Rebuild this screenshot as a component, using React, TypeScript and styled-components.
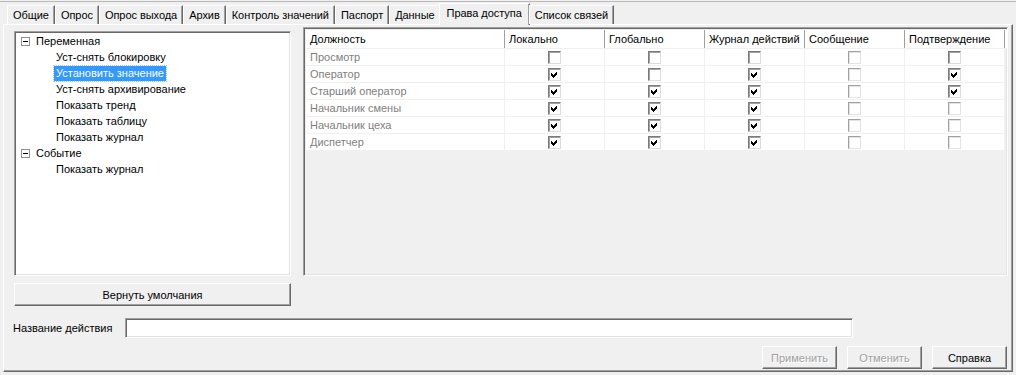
import * as React from 'react';
import styled, { createGlobalStyle, css } from 'styled-components';

const GlobalStyle = createGlobalStyle`
    html, body {
        margin: 0;
        padding: 0;
        background: #f0f0f0;
    }
    body {
        font-family: "Liberation Sans", Arial, sans-serif;
        font-size: 11px;
        color: #000;
    }
`;

const tabs = [
    'Общие',
    'Опрос',
    'Опрос выхода',
    'Архив',
    'Контроль значений',
    'Паспорт',
    'Данные',
    'Права доступа',
    'Список связей',
];

const treeGroups = [
    {
        title: 'Переменная',
        items: [
            'Уст-снять блокировку',
            'Установить значение',
            'Уст-снять архивирование',
            'Показать тренд',
            'Показать таблицу',
            'Показать журнал',
        ],
    },
    {
        title: 'Событие',
        items: ['Показать журнал'],
    },
];

const columns = ['Локально', 'Глобально', 'Журнал действий', 'Сообщение', 'Подтверждение'];

// on = checked, off = disabled
type Cell = { on: boolean; off?: boolean };
const c = (on: number, disabled = false): Cell => ({ on: !!on, off: disabled });

const roles: { name: string; cells: Cell[] }[] = [
    { name: 'Просмотр', cells: [c(0), c(0), c(0), c(0, true), c(0)] },
    { name: 'Оператор', cells: [c(1), c(0), c(1), c(0, true), c(1)] },
    { name: 'Старший оператор', cells: [c(1), c(1), c(1), c(0, true), c(1)] },
    { name: 'Начальник смены', cells: [c(1), c(1), c(1), c(0, true), c(0, true)] },
    { name: 'Начальник цеха', cells: [c(1), c(1), c(1), c(0, true), c(0, true)] },
    { name: 'Диспетчер', cells: [c(1), c(1), c(1), c(0, true), c(0, true)] },
];

const ACTIVE_TAB = 'Права доступа';
const SELECTED_ITEM = 'Установить значение';

export default function App() {
    return (
        <Window>
            <GlobalStyle />
            <TabStrip>
                {tabs.map((t) => (
                    <Tab key={t} active={t === ACTIVE_TAB}>{t}</Tab>
                ))}
            </TabStrip>
            <TabPage>
                <MainRow>
                    <LeftColumn>
                        <TreePanel>
                            {treeGroups.map((g) => (
                                <React.Fragment key={g.title}>
                                    <GroupRow>
                                        <Expander>
                                            <svg width="9" height="9" viewBox="0 0 9 9" shapeRendering="crispEdges">
                                                <rect x="0.5" y="0.5" width="8" height="8" fill="#fff" stroke="#919191" />
                                                <rect x="2" y="4" width="5" height="1" fill="#000" />
                                            </svg>
                                        </Expander>
                                        <span>{g.title}</span>
                                    </GroupRow>
                                    {g.items.map((item, i) => (
                                        <ItemRow key={i}>
                                            <ItemLabel selected={g.title === 'Переменная' && item === SELECTED_ITEM}>
                                                {item}
                                            </ItemLabel>
                                        </ItemRow>
                                    ))}
                                </React.Fragment>
                            ))}
                        </TreePanel>
                        <Button wide>Вернуть умолчания</Button>
                    </LeftColumn>
                    <GridPanel>
                        <HeaderRow>
                            <HeaderCell first>Должность</HeaderCell>
                            {columns.map((col) => (
                                <HeaderCell key={col}>{col}</HeaderCell>
                            ))}
                        </HeaderRow>
                        {roles.map((r) => (
                            <GridRow key={r.name}>
                                <NameCell>{r.name}</NameCell>
                                {r.cells.map((cell, i) => (
                                    <CheckCell key={i}>
                                        <CheckBox disabled={cell.off}>
                                            {cell.on && (
                                                <svg width="9" height="9" viewBox="0 0 9 9" shapeRendering="crispEdges">
                                                    <polygon points="1,3 3,5 7,1 7,4 3,8 1,6" fill="#000" />
                                                </svg>
                                            )}
                                        </CheckBox>
                                    </CheckCell>
                                ))}
                            </GridRow>
                        ))}
                    </GridPanel>
                </MainRow>
                <NameRow>
                    <NameLabel>Название действия</NameLabel>
                    <TextInput />
                </NameRow>
                <ButtonRow>
                    <Button disabled>Применить</Button>
                    <Button disabled>Отменить</Button>
                    <Button>Справка</Button>
                </ButtonRow>
            </TabPage>
        </Window>
    );
}

const Window = styled.div`
    width: 1016px;
    height: 375px;
    box-sizing: border-box;
    background: #f0f0f0;
    border-top: 1px solid #b9b9b9;
    margin-top: 1px;
    overflow: hidden;
`;

const TabStrip = styled.div`
    display: flex;
    align-items: flex-end;
    height: 22px;
    padding-left: 7px;
    position: relative;
    z-index: 1;
`;

const Tab = styled.div<{ active?: boolean }>`
    box-sizing: border-box;
    height: 19px;
    padding: 0 5px 1px;
    display: flex;
    align-items: center;
    white-space: nowrap;
    letter-spacing: -0.05px;
    background: #f0f0f0;
    border-top: 1px solid #fff;
    border-left: 1px solid #fff;
    border-right: 1px solid #696969;
    box-shadow: inset -1px 0 0 #a0a0a0;
    ${(p) => p.active && css`
        height: 22px;
        margin: 0 -1px -1px -2px;
        padding: 0 7px 4px;
    `}
`;

const TabPage = styled.div`
    box-sizing: border-box;
    margin-left: 3px;
    width: 1010px;
    height: 348px;
    border-top: 1px solid #fff;
    border-left: 1px solid #fff;
    border-right: 1px solid #696969;
    border-bottom: 1px solid #696969;
    box-shadow: inset -1px -1px 0 #a0a0a0;
    padding: 2px 4px 0 10px;
`;

const MainRow = styled.div`
    display: flex;
    gap: 12px;
`;

const LeftColumn = styled.div`
    display: flex;
    flex-direction: column;
    width: 277px;
    padding-top: 4px;
`;

const sunken = css`
    box-sizing: border-box;
    border-style: solid;
    border-width: 1px;
    border-color: #a0a0a0 #fff #fff #a0a0a0;
    box-shadow: inset 1px 1px 0 #696969, inset -1px -1px 0 #e3e3e3;
`;

const TreePanel = styled.div`
    ${sunken};
    height: 245px;
    background: #fff;
    padding: 1px 0 0 6px;
`;

const GroupRow = styled.div`
    display: flex;
    align-items: center;
    gap: 6px;
    height: 16px;
`;

const Expander = styled.span`
    display: flex;
    width: 9px;
    height: 9px;
`;

const ItemRow = styled.div`
    display: flex;
    align-items: center;
    height: 16px;
    padding-left: 33px;
`;

const ItemLabel = styled.span<{ selected?: boolean }>`
    padding: 1px 2px;
    line-height: 13px;
    ${(p) => p.selected && css`
        background: #3399ff;
        color: #fff;
        outline: 1px dotted #99ccff;
    `}
`;

const Button = styled.button<{ wide?: boolean }>`
    box-sizing: border-box;
    height: 23px;
    width: ${(p) => (p.wide ? '277px' : '75px')};
    margin-top: ${(p) => (p.wide ? '7px' : '0')};
    font-family: "Liberation Sans", Arial, sans-serif;
    font-size: 11px;
    color: #000;
    background: #f0f0f0;
    border-style: solid;
    border-width: 1px;
    border-color: #fff #696969 #696969 #fff;
    box-shadow: inset -1px -1px 0 #a0a0a0;
    padding: 0;
    &:disabled {
        color: #a0a0a0;
        text-shadow: 1px 1px 0 #fff;
    }
`;

const GridPanel = styled.div`
    ${sunken};
    width: 705px;
    height: 249px;
    background: #f0f0f0;
    padding: 2px 0 0 2px;
`;

const HeaderRow = styled.div`
    display: flex;
    height: 18px;
    background: #fff;
    border-bottom: 1px solid #f0f0f0;
`;

const HeaderCell = styled.div<{ first?: boolean }>`
    box-sizing: border-box;
    width: ${(p) => (p.first ? '199px' : '100px')};
    display: flex;
    align-items: center;
    padding-left: 4px;
    border-right: 1px solid #a0a0a0;
    box-shadow: 1px 0 0 #fff;
    white-space: nowrap;
`;

const GridRow = styled.div`
    display: flex;
    height: 17px;
    background: #fff;
    border-bottom: 1px solid #f0f0f0;
    box-sizing: border-box;
    width: 699px;
`;

const NameCell = styled.div`
    box-sizing: border-box;
    width: 199px;
    padding-left: 4px;
    display: flex;
    align-items: center;
    color: #808080;
    border-right: 1px solid #f0f0f0;
`;

const CheckCell = styled.div`
    box-sizing: border-box;
    width: 100px;
    display: flex;
    align-items: center;
    justify-content: center;
    border-right: 1px solid #f0f0f0;
`;

const CheckBox = styled.span<{ disabled?: boolean }>`
    box-sizing: border-box;
    width: 13px;
    height: 13px;
    display: flex;
    align-items: center;
    justify-content: center;
    background: #fff;
    border-style: solid;
    border-width: 1px;
    border-color: ${(p) => (p.disabled ? '#a0a0a0 #e3e3e3 #e3e3e3 #a0a0a0' : '#7a7a7a #dcdcdc #dcdcdc #7a7a7a')};
    box-shadow: ${(p) => (p.disabled ? 'inset 1px 1px 0 #e3e3e3' : 'inset 1px 1px 0 #a0a0a0')};
`;

const NameRow = styled.div`
    display: flex;
    align-items: center;
    margin-top: 12px;
    margin-left: -1px;
`;

const NameLabel = styled.span`
    width: 112px;
    white-space: nowrap;
`;

const TextInput = styled.input`
    ${sunken};
    width: 728px;
    height: 20px;
    background: #fff;
    font-family: "Liberation Sans", Arial, sans-serif;
    font-size: 11px;
    padding: 0 3px;
    outline: none;
`;

const ButtonRow = styled.div`
    display: flex;
    justify-content: flex-end;
    gap: 10px;
    margin-top: 8px;
    padding-right: 1px;
`;
